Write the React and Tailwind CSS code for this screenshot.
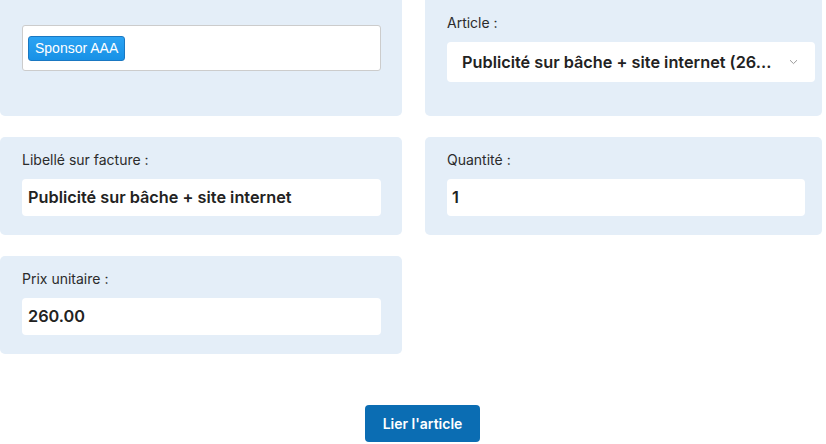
export default function App() {
  const font = { fontFamily: 'Inter, "Noto Sans", sans-serif' }
  return (
    <div className="w-[826px] h-[444px] bg-white overflow-hidden text-[#212529]" style={font}>
      <div className="grid grid-cols-[402px_397px] gap-x-[23px] gap-y-[21px]">
        {/* Sponsor */}
        <div className="h-[116px] bg-[#e4eef8] rounded-b-[5px] px-[22px] pt-[25px]">
          <div className="w-[359px] h-[46px] bg-white border border-[#cccccc] rounded-[3px] flex items-center px-[5px]">
            <span className="h-[25px] px-[6px] flex items-center rounded-[3px] border border-[#1a78c2] bg-gradient-to-b from-[#2ba3f3] to-[#1791e6] text-white text-[14px]" style={{ fontFamily: '"Liberation Sans", Arial, sans-serif' }}>
              Sponsor AAA
            </span>
          </div>
        </div>

        {/* Article */}
        <div className="h-[116px] bg-[#e4eef8] rounded-b-[5px] pl-[22px] pt-[13px]">
          <div className="text-[14px] leading-[20px] text-[#2b2b2b]">Article :</div>
          <div className="mt-[9px] w-[368px] h-[40px] bg-white rounded-[4px] flex items-center pl-[15px] pr-[17px]">
            <span className="flex-1 text-[16.3px] font-semibold text-[#222]">Publicité sur bâche + site internet (26...</span>
            <svg width="9" height="6" viewBox="0 0 9 6" className="text-[#999]">
              <path d="M1 1.2 L4.5 4.6 L8 1.2" fill="none" stroke="currentColor" strokeWidth="1" />
            </svg>
          </div>
        </div>

        {/* Libellé */}
        <div className="h-[98px] bg-[#e4eef8] rounded-[5px] px-[22px] pt-[13px]">
          <div className="text-[14px] leading-[20px] text-[#2b2b2b]">Libellé sur facture :</div>
          <div className="mt-[9px] w-[359px] h-[37px] bg-white rounded-[4px] flex items-center px-[6px] text-[16.3px] font-semibold text-[#222]">
            Publicité sur bâche + site internet
          </div>
        </div>

        {/* Quantité */}
        <div className="h-[98px] bg-[#e4eef8] rounded-[5px] pl-[22px] pt-[13px]">
          <div className="text-[14px] leading-[20px] text-[#2b2b2b]">Quantité :</div>
          <div className="mt-[9px] w-[358px] h-[37px] bg-white rounded-[4px] flex items-center px-[5px] text-[16.3px] font-semibold text-[#222]">
            1
          </div>
        </div>

        {/* Prix */}
        <div className="h-[98px] bg-[#e4eef8] rounded-[5px] px-[22px] pt-[13px]">
          <div className="text-[14px] leading-[20px] text-[#2b2b2b]">Prix unitaire :</div>
          <div className="mt-[9px] w-[359px] h-[37px] bg-white rounded-[4px] flex items-center px-[6px] text-[16.3px] font-semibold text-[#222]">
            260.00
          </div>
        </div>
      </div>

      <div className="flex justify-center mt-[51px] pl-[19px]">
        <button className="w-[115px] h-[37px] rounded-[4px] bg-[#0b6db3] text-white text-[14px] font-semibold">
          Lier l'article
        </button>
      </div>
    </div>
  )
}
